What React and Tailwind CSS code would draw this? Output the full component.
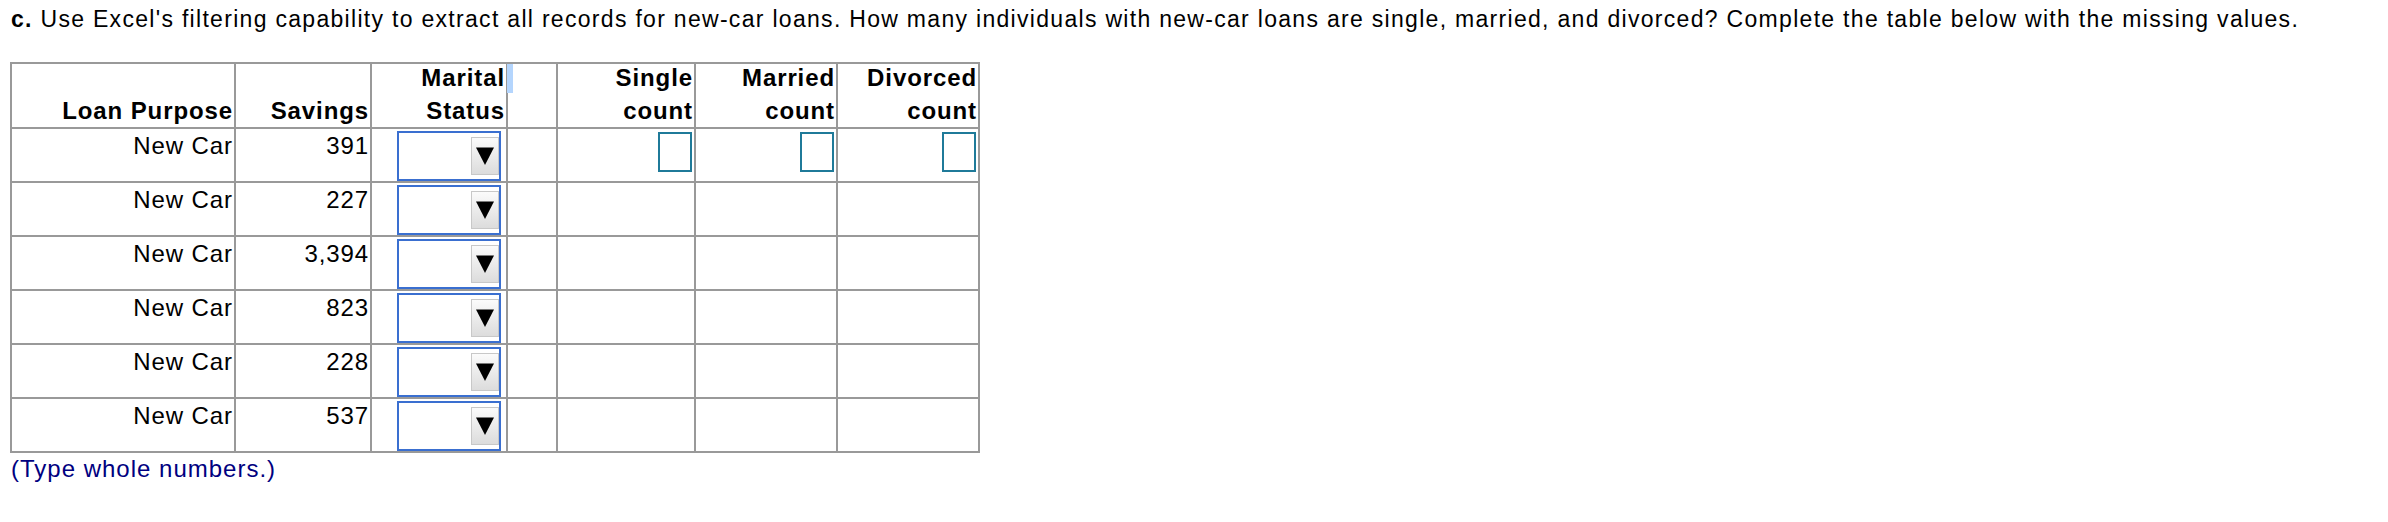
import React from 'react';

// Loan records shown in part (c)
const records = [
  { purpose: 'New Car', savings: '391' },
  { purpose: 'New Car', savings: '227' },
  { purpose: 'New Car', savings: '3,394' },
  { purpose: 'New Car', savings: '823' },
  { purpose: 'New Car', savings: '228' },
  { purpose: 'New Car', savings: '537' },
];

function StatusSelect() {
  return (
    <div className="ml-auto mr-[5px] mt-[2px] flex h-[50px] w-[104px] items-center justify-end border-2 border-[#3a6fd0] bg-white">
      <div className="flex h-[38px] w-[28px] items-center justify-center border border-[#c8c8c8] bg-linear-to-b from-[#fbfbfb] to-[#dcdcdc]">
        <svg width="18" height="18" viewBox="0 0 18 18">
          <polygon points="0,0.5 18,0.5 9,18" fill="#000" />
        </svg>
      </div>
    </div>
  );
}

function CountInput() {
  return <div className="ml-auto mr-[2px] mt-[3px] h-[40px] w-[34px] border-2 border-[#1f7a99] bg-white" />;
}

export default function App() {
  return (
    <div className="min-h-screen bg-white font-['Liberation_Sans',Arial,sans-serif] text-black">
      <p className="whitespace-nowrap px-[11px] pt-[7px] text-[23px] leading-[25px] tracking-[1.3px]">
        <b>c.</b> Use Excel's filtering capability to extract all records for new-car loans. How many individuals with
        new-car loans are single, married, and divorced? Complete the table below with the missing values.
      </p>

      <div className="ml-[10px] mt-[30px] inline-grid grid-cols-[222px_134px_134px_48px_136px_140px_140px] grid-rows-[63px_repeat(6,52px)] gap-[2px] bg-[#999] p-[2px] text-[24px] leading-[33px] tracking-[0.9px]">
        {/* header row */}
        <div className="flex items-end justify-end bg-white pr-[1px] font-bold">Loan Purpose</div>
        <div className="flex items-end justify-end bg-white pr-[1px] font-bold">Savings</div>
        <div className="flex items-end justify-end bg-white pr-[1px] text-right font-bold">
          Marital
          <br />
          Status
        </div>
        <div className="relative bg-white">
          <div className="absolute left-[-1px] top-0 h-[29px] w-[6px] bg-[#b4d5fd]" />
        </div>
        <div className="flex items-end justify-end bg-white pr-[1px] text-right font-bold">
          Single
          <br />
          count
        </div>
        <div className="flex items-end justify-end bg-white pr-[1px] text-right font-bold">
          Married
          <br />
          count
        </div>
        <div className="flex items-end justify-end bg-white pr-[1px] text-right font-bold">
          Divorced
          <br />
          count
        </div>

        {records.map((r, idx) => (
          <React.Fragment key={idx}>
            <div className="bg-white pr-[1px] text-right">{r.purpose}</div>
            <div className="bg-white pr-[1px] text-right">{r.savings}</div>
            <div className="flex bg-white">
              <StatusSelect />
            </div>
            <div className="bg-white" />
            <div className="flex bg-white">{idx === 0 && <CountInput />}</div>
            <div className="flex bg-white">{idx === 0 && <CountInput />}</div>
            <div className="flex bg-white">{idx === 0 && <CountInput />}</div>
          </React.Fragment>
        ))}
      </div>

      <p className="ml-[11px] mt-[2px] text-[24px] leading-[27px] tracking-[1px] text-[#000080]">(Type whole numbers.)</p>
    </div>
  );
}
